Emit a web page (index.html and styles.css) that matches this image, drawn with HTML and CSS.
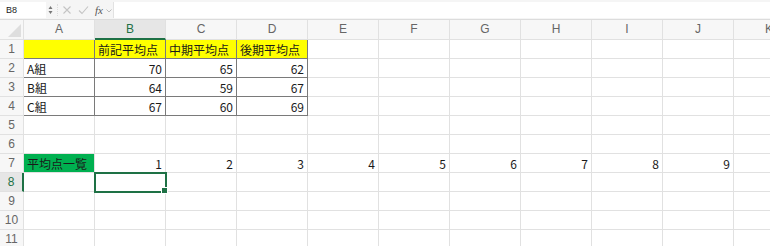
FILE: index.html
```html
<!DOCTYPE html>
<html>
<head>
    <meta charset="UTF-8">
    <link rel="stylesheet" href="styles.css">
</head>
<body>
    <div class="formula-bar">
        <div class="name-box">B8</div>
        <div class="spinner">
            <svg width="5" height="10" viewBox="0 0 5 10"><path d="M0.5 4 L2.5 1 L4.5 4 Z M0.5 6 L2.5 9 L4.5 6 Z" fill="#777"/></svg>
        </div>
        <div class="fb-sep"></div>
        <div class="fb-icon">
            <svg width="10" height="10" viewBox="0 0 10 10"><path d="M1.5 1.5 L8.5 8.5 M8.5 1.5 L1.5 8.5" stroke="#c4c4c4" stroke-width="1.1"/></svg>
        </div>
        <div class="fb-icon">
            <svg width="11" height="10" viewBox="0 0 11 10"><path d="M1 5.5 L4 8.5 L10 1.5" stroke="#c4c4c4" stroke-width="1.1" fill="none"/></svg>
        </div>
        <div class="fx">fx</div>
        <div class="fx-chev">
            <svg width="6" height="4" viewBox="0 0 6 4"><path d="M0.5 0.5 L3 3 L5.5 0.5" stroke="#bbb" fill="none"/></svg>
        </div>
        <div class="formula-input"></div>
    </div>

    <div class="sheet" id="sheet">
        <!-- grid filled by script -->
    </div>

    <script>
        // Sheet contents: row -> column -> value
        const cols = ['A', 'B', 'C', 'D', 'E', 'F', 'G', 'H', 'I', 'J', 'K'];
        const cells = {
            1: { B: '前記平均点', C: '中期平均点', D: '後期平均点' },
            2: { A: 'A組', B: 70, C: 65, D: 62 },
            3: { A: 'B組', B: 64, C: 59, D: 67 },
            4: { A: 'C組', B: 67, C: 60, D: 69 },
            7: { A: '平均点一覧', B: 1, C: 2, D: 3, E: 4, F: 5, G: 6, H: 7, I: 8, J: 9 }
        };

        const sheet = document.getElementById('sheet');

        function addCell(cls, text) {
            const div = document.createElement('div');
            div.className = cls;
            if (text !== undefined) div.textContent = text;
            sheet.appendChild(div);
            return div;
        }

        // Column headers
        addCell('corner');
        cols.forEach(c => addCell('col-head' + (c === 'B' ? ' active' : ''), c));

        // Rows
        for (let r = 1; r <= 11; r++) {
            addCell('row-head' + (r === 8 ? ' active' : ''), r);
            cols.forEach(c => {
                const value = (cells[r] || {})[c];
                let cls = 'cell';
                if (typeof value === 'number') cls += ' num';
                if (r === 1 && 'ABCD'.includes(c)) cls += ' yellow';
                if (r <= 4 && 'ABCD'.includes(c)) cls += ' boxed';
                if (r === 7 && c === 'A') cls += ' green';
                if (r === 8 && c === 'B') cls += ' selected';
                addCell(cls, value);
            });
        }
    </script>
</body>
</html>
```

FILE: styles.css
```css
* {
    margin: 0;
    padding: 0;
    box-sizing: border-box;
}

body {
    width: 770px;
    height: 246px;
    overflow: hidden;
    background: #fff;
    font-family: "Noto Sans CJK JP", "Liberation Sans", sans-serif;
    color: #1a1a1a;
}

.formula-bar {
    display: flex;
    align-items: center;
    height: 20px;
    padding: 2px 0 2px 0;
    background: #f5f5f5;
    border-bottom: 1px solid #dcdcdc;
}

.name-box {
    width: 46px;
    height: 16px;
    background: #fff;
    font-family: "Liberation Sans", sans-serif;
    font-size: 9px;
    line-height: 16px;
    padding-left: 6px;
    color: #222;
}

.spinner {
    display: flex;
    align-items: center;
    width: 8px;
    padding-left: 2px;
}

.fb-sep {
    width: 1px;
    height: 12px;
    margin: 0 4px 0 3px;
    border-left: 1px dotted #dcdcdc;
}

.fb-icon {
    display: flex;
    align-items: center;
    width: 16px;
}

.fx {
    font-family: "Liberation Serif", serif;
    font-style: italic;
    font-size: 11px;
    color: #555;
    margin-left: 1px;
}

.fx-chev {
    display: flex;
    margin: 2px 1px 0 3px;
}

.formula-input {
    flex: 1;
    height: 16px;
    background: #fff;
    border-left: 1px solid #e2e2e2;
}

.sheet {
    display: grid;
    grid-template-columns: 24px repeat(11, 71px);
    grid-template-rows: 20px repeat(11, 19px);
}

.corner,
.col-head,
.row-head,
.cell {
    border-right: 1px solid #e1e1e1;
    border-bottom: 1px solid #e1e1e1;
}

.corner {
    position: relative;
    background: #f7f7f7;
}

.corner::after {
    content: "";
    position: absolute;
    right: 2px;
    bottom: 2px;
    border-style: solid;
    border-width: 0 0 13px 13px;
    border-color: transparent transparent #dedede transparent;
}

.col-head {
    background: #f7f7f7;
    color: #666;
    font-family: "Liberation Sans", sans-serif;
    font-size: 12px;
    line-height: 19px;
    text-align: center;
}

.col-head.active {
    background: #e6e6e6;
    color: #1e7145;
    border-bottom: 2px solid #1e7145;
    line-height: 18px;
}

.row-head {
    background: #f7f7f7;
    color: #666;
    font-family: "Liberation Sans", sans-serif;
    font-size: 12px;
    line-height: 18px;
    text-align: center;
}

.row-head.active {
    background: #e6e6e6;
    color: #1e7145;
    border-right: 2px solid #1e7145;
}

.cell {
    font-size: 12px;
    line-height: 19px;
    padding: 0 3px;
    white-space: nowrap;
    overflow: hidden;
}

.cell.num {
    text-align: right;
}

.cell.yellow {
    background: #ffff00;
}

.cell.boxed {
    border-right-color: #7a7a7a;
    border-bottom-color: #7a7a7a;
}

.cell.green {
    background: #00b050;
}

.cell.selected {
    position: relative;
    overflow: visible;
    outline: 2px solid #1e7145;
    outline-offset: -1px;
}

.cell.selected::after {
    content: "";
    position: absolute;
    right: -3px;
    bottom: -3px;
    width: 5px;
    height: 5px;
    background: #1e7145;
    border: 1px solid #fff;
}
```
